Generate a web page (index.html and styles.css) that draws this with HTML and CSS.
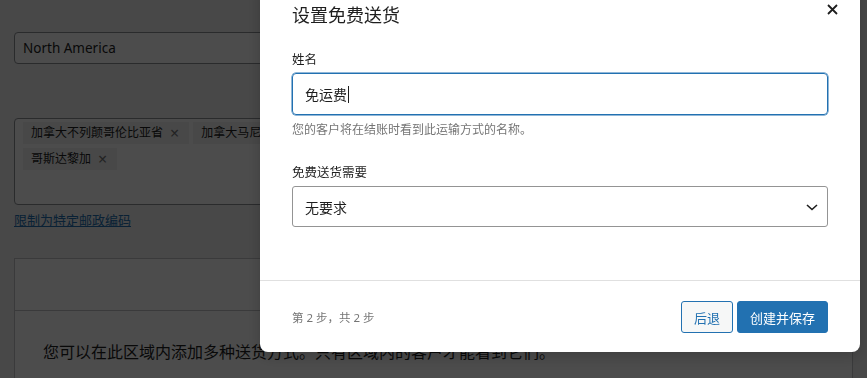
FILE: index.html
```html
<!DOCTYPE html>
<html lang="zh-CN">
<head>
<meta charset="utf-8">
<link rel="stylesheet" href="styles.css">
</head>
<body>
<div class="page">
  <div class="region-input">North America</div>
  <div class="tag-box">
    <span class="tag">加拿大不列颠哥伦比亚省<span class="tag-x">×</span></span>
    <span class="tag">加拿大马尼托巴省<span class="tag-x">×</span></span>
    <span class="tag">哥斯达黎加<span class="tag-x">×</span></span>
  </div>
  <a class="postcode-link" href="#">限制为特定邮政编码</a>
  <div class="card">
    <div class="card-head"></div>
    <div class="card-body">您可以在此区域内添加多种送货方式。只有区域内的客户才能看到它们。</div>
  </div>
</div>
<div class="overlay"></div>
<div class="modal">
  <div class="modal-head">
    <h1 class="modal-title">设置免费送货</h1>
    <span class="close">
      <svg width="11" height="11" viewBox="0 0 11 11"><path d="M1 1 L10 10 M10 1 L1 10" stroke="#1e1e1e" stroke-width="1.8" fill="none"/></svg>
    </span>
  </div>
  <div class="modal-body">
    <label class="field-label">姓名</label>
    <div class="text-input">免运费<span class="caret"></span></div>
    <p class="help">您的客户将在结账时看到此运输方式的名称。</p>
    <label class="field-label second">免费送货需要</label>
    <div class="select">
      <span>无要求</span>
      <svg width="14" height="10" viewBox="0 0 14 10"><path d="M2 3 L7 7.5 L12 3" stroke="#1e1e1e" stroke-width="1.6" fill="none"/></svg>
    </div>
  </div>
  <div class="modal-foot">
    <span class="steps">第 2 步，共 2 步</span>
    <div class="buttons">
      <button class="btn secondary">后退</button>
      <button class="btn primary">创建并保存</button>
    </div>
  </div>
</div>
</body>
</html>
```
FILE: styles.css
```css
* { box-sizing: border-box; }
html, body { margin: 0; padding: 0; }
body {
  background: #f0f0f1;
  font-family: "Noto Sans", "Noto Sans CJK SC", sans-serif;
  color: #1e1e1e;
  width: 867px;
  height: 378px;
  overflow: hidden;
}
.page {
  padding: 32px 14px 0 14px;
  display: flex;
  flex-direction: column;
}
.region-input {
  width: 560px;
  height: 32px;
  background: #fff;
  border: 1px solid #8c8f94;
  border-radius: 4px;
  padding: 0 8px;
  font-size: 13.5px;
  line-height: 30px;
}
.tag-box {
  margin-top: 54px;
  width: 400px;
  height: 87px;
  background: #fff;
  border: 1px solid #8c8f94;
  border-radius: 4px;
  padding: 3px 8px;
  display: flex;
  flex-wrap: wrap;
  align-content: flex-start;
  gap: 4px;
}
.tag {
  background: #f0f0f0;
  height: 22px;
  line-height: 22px;
  padding: 0 10px 0 8px;
  font-size: 12px;
  color: #1e1e1e;
  white-space: nowrap;
  display: flex;
  align-items: center;
}
.tag-x {
  color: #757575;
  margin-left: 7px;
  font-size: 16px;
  line-height: 22px;
}
.postcode-link {
  margin-top: 6px;
  font-size: 13px;
  line-height: 18px;
  color: #2271b1;
  align-self: flex-start;
}
.card {
  margin-top: 29px;
  width: 839px;
  background: #fff;
  border: 1px solid #c3c4c7;
}
.card-head { height: 52px; border-bottom: 1px solid #c3c4c7; }
.card-body {
  padding: 29px 28px;
  font-size: 16px;
  line-height: 24px;
}
.overlay {
  position: fixed;
  inset: 0;
  background: rgba(0, 0, 0, 0.7);
}
.modal {
  position: fixed;
  left: 260px;
  top: -20px;
  width: 600px;
  background: #fff;
  border-radius: 8px;
  box-shadow: 0 4px 16px rgba(0,0,0,0.2);
}
.modal-head {
  position: relative;
  padding: 24px 32px 0 32px;
}
.modal-title {
  margin: 0;
  font-size: 18px;
  font-weight: 400;
  line-height: 22px;
  color: #1e1e1e;
}
.close {
  position: absolute;
  top: 24px;
  right: 22px;
  width: 11px;
  height: 11px;
  display: flex;
}
.modal-body {
  padding: 25px 32px 53px 32px;
  display: flex;
  flex-direction: column;
}
.field-label {
  font-size: 12.5px;
  line-height: 18px;
  color: #1e1e1e;
  margin-bottom: 4px;
}
.field-label.second { margin-top: 26px; }
.text-input {
  height: 42px;
  border: 1.5px solid #2271b1;
  box-shadow: 0 0 0 0.5px #2271b1;
  border-radius: 4px;
  padding: 0 12px;
  font-size: 14px;
  line-height: 39px;
  display: flex;
  align-items: center;
}
.caret {
  display: inline-block;
  width: 1px;
  height: 17px;
  background: #1e1e1e;
  margin-left: 1px;
}
.help {
  margin: 7px 0 0 0;
  font-size: 12px;
  line-height: 16px;
  color: #757575;
}
.select {
  height: 41px;
  border: 1px solid #949494;
  border-radius: 3px;
  padding: 0 8px 0 12px;
  font-size: 14px;
  display: flex;
  align-items: center;
  justify-content: space-between;
}
.modal-foot {
  border-top: 1px solid #e0e0e0;
  padding: 20px 32px 19px 32px;
  display: flex;
  align-items: center;
  justify-content: space-between;
}
.steps {
  font-size: 11.5px;
  color: #757575;
}
.buttons { display: flex; gap: 4px; }
.btn {
  height: 32px;
  font-family: "Noto Sans", "Noto Sans CJK SC", sans-serif;
  font-size: 13px;
  border-radius: 3px;
  padding: 0;
  cursor: pointer;
}
.btn.secondary {
  background: #f6f7f7;
  border: 1px solid #2271b1;
  color: #2271b1;
  width: 52px;
}
.btn.primary {
  background: #2271b1;
  border: 1px solid #2271b1;
  color: #fff;
  width: 91px;
}
```
